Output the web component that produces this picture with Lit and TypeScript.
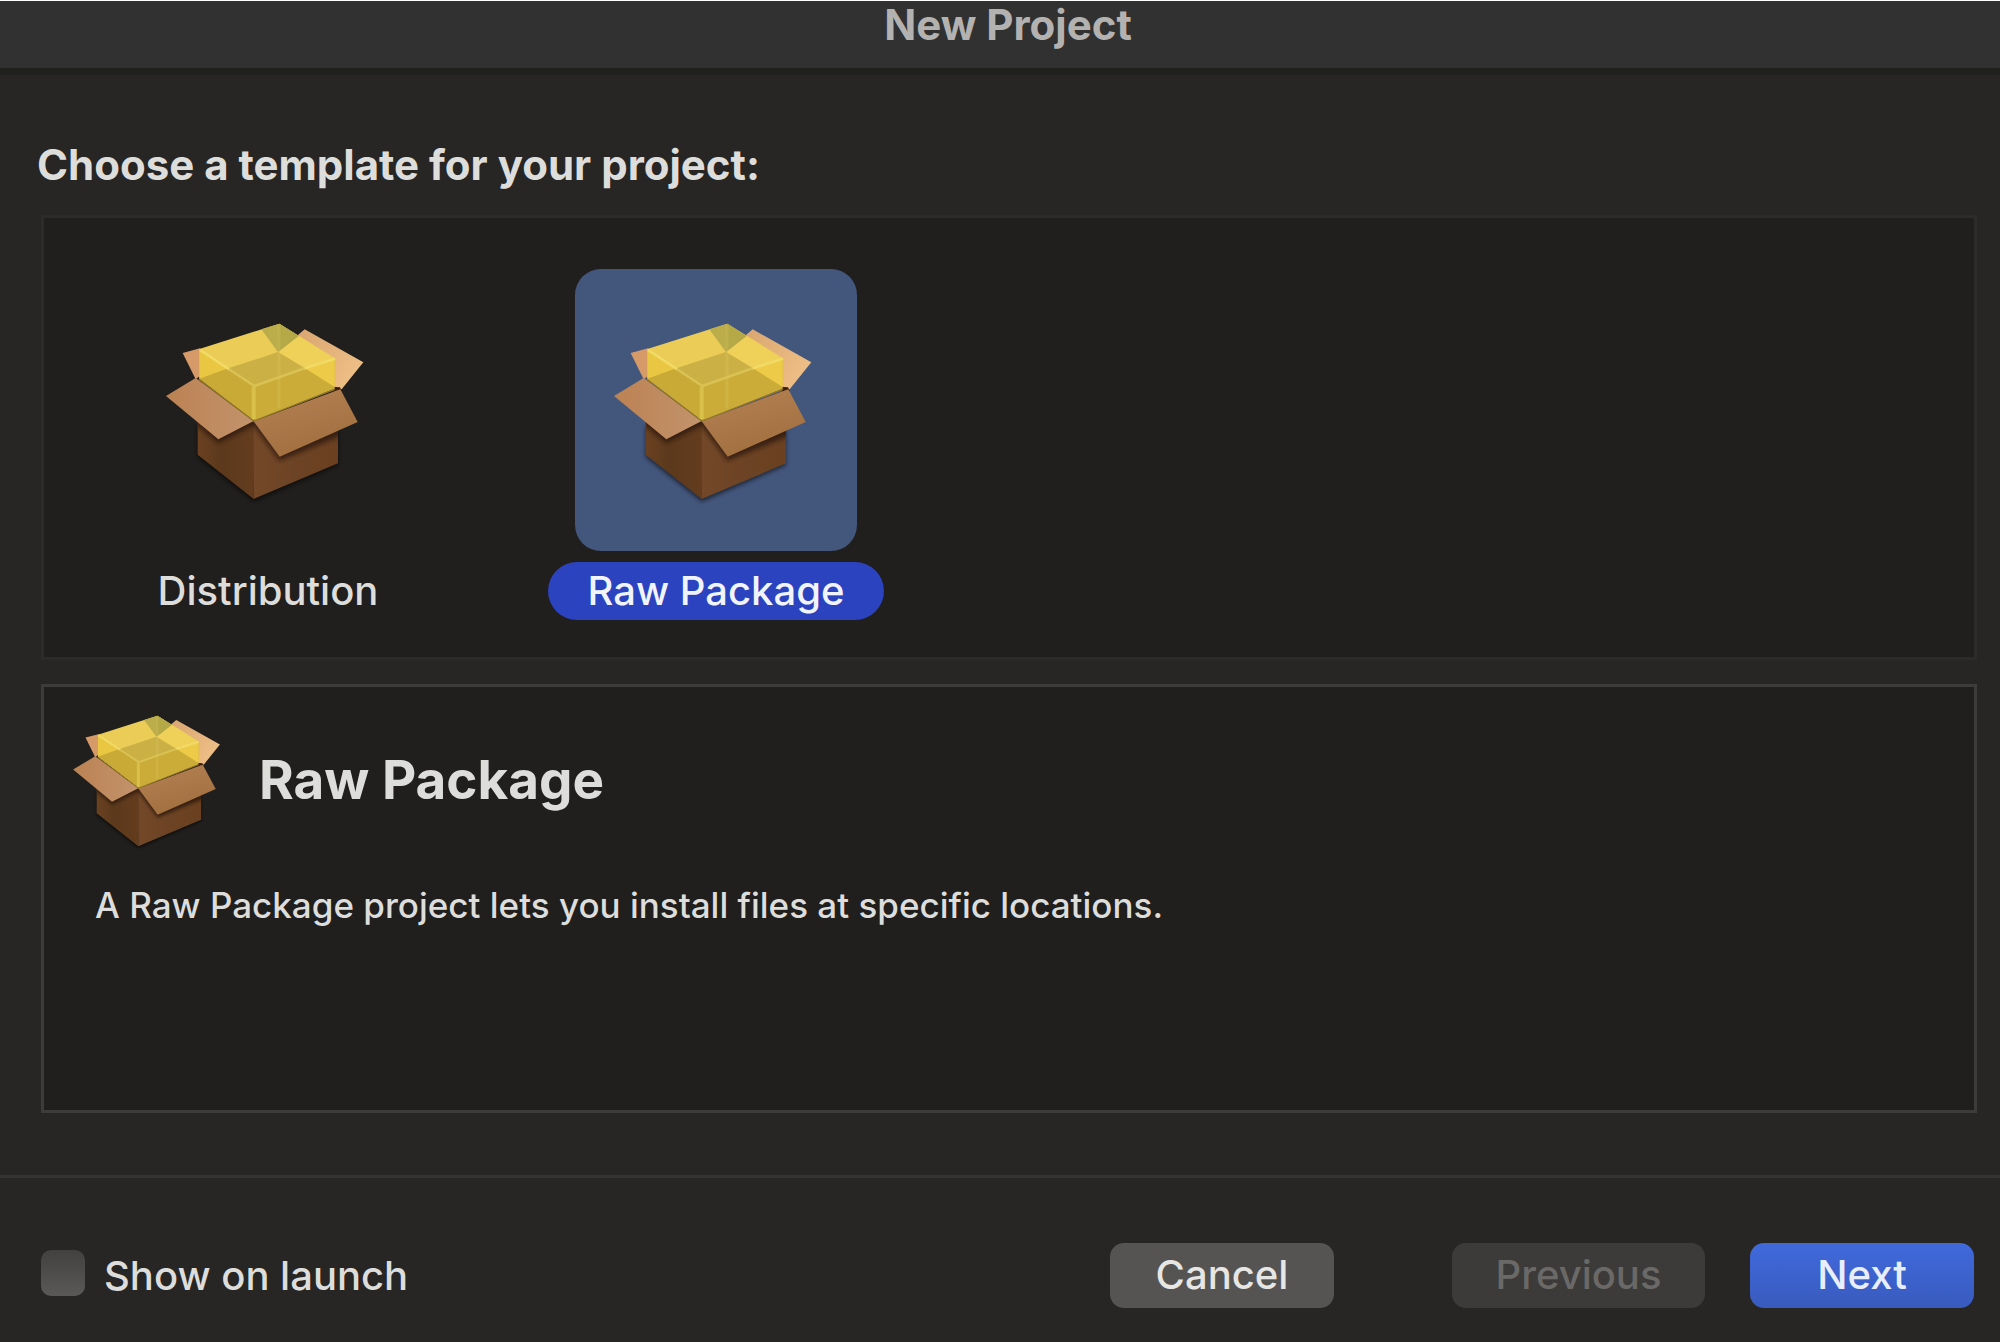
import { LitElement, html, css } from "lit";
import { customElement, property, state } from "lit/decorators.js";

/** Open cardboard box with a translucent yellow block floating in it. */
@customElement("package-icon")
class PackageIcon extends LitElement {
  static styles = css`
    :host {
      display: block;
    }
    .art {
      display: block;
      width: 100%;
      height: auto;
    }
  `;

  render() {
    return html`
      <svg class="art" viewBox="-9 -33 726 726" aria-hidden="true">
        <defs>
          <linearGradient id="side-left" x1="0" y1="0" x2="1" y2="0">
            <stop offset="0" stop-color="#6a4121" />
            <stop offset="0.4" stop-color="#5c391c" />
            <stop offset="1" stop-color="#643c1e" />
          </linearGradient>
          <linearGradient id="side-right" x1="0" y1="0" x2="1" y2="0">
            <stop offset="0" stop-color="#724829" />
            <stop offset="0.5" stop-color="#6c4324" />
            <stop offset="1" stop-color="#6a4020" />
          </linearGradient>
          <linearGradient id="flap-left" x1="0" y1="0" x2="1" y2="0">
            <stop offset="0" stop-color="#bc8253" />
            <stop offset="1" stop-color="#c2936c" />
          </linearGradient>
          <linearGradient id="flap-right" x1="0" y1="0" x2="0.4" y2="1">
            <stop offset="0" stop-color="#b58155" />
            <stop offset="1" stop-color="#a2703f" />
          </linearGradient>
          <linearGradient id="flap-back" x1="0" y1="0" x2="1" y2="0.4">
            <stop offset="0" stop-color="#d5a06c" />
            <stop offset="1" stop-color="#ecbd84" />
          </linearGradient>
          <filter id="soft" x="-20%" y="-20%" width="140%" height="150%">
            <feGaussianBlur stdDeviation="6" />
          </filter>
          <clipPath id="sides">
            <path d="M143 240 L313 365 L564 270 V490 L311 597 L143 464Z" />
          </clipPath>
        </defs>
        <path d="M143 380 H564 V496 L311 605 L143 472Z" fill="#000" opacity="0.55" filter="url(#soft)" />
        <path d="M98 159 L150 145 L200 190 L137 238Z" fill="#d69a69" />
        <path d="M384 156 L464 88 L640 187 L575 268 L540 262Z" fill="url(#flap-back)" />
        <path d="M548 260 L570 262 L576 274 L552 274Z" fill="#3a2110" />
        <path d="M143 240 L313 365 L311 597 L143 464Z" fill="url(#side-left)" />
        <path d="M311 365 L564 270 V490 L311 597Z" fill="url(#side-right)" />
        <g clip-path="url(#sides)">
          <path d="M60 310 L205 430 L311 377 L389 482 L620 388 V280 L313 340Z" fill="#2a1709" opacity="0.75" filter="url(#soft)" />
        </g>
        <path d="M48 288 L137 234 L311 363 L205 418Z" fill="url(#flap-left)" />
        <path d="M311 364 L571 268 L623 366 L389 470Z" fill="url(#flap-right)" />

        <path d="M148 147 L388 71 L554 175 L313 258Z" fill="#ebcc56" />
        <path d="M384 156 L446 107 L554 175 L465 205Z" fill="#efd058" />
        <path d="M334 88 L388 71 L446 107 L384 156Z" fill="#bbad49" />
        <path d="M388 71 L446 107 L384 156Z" fill="#b4a847" />
        <path d="M235 205 L384 156 L465 205 L313 258Z" fill="#cbb046" />
        <path d="M148 147 L313 258 V363 L148 237Z" fill="#c9aa37" />
        <path d="M313 258 L554 175 V266 L313 363Z" fill="#cbac38" />
        <path d="M148 147 L235 205 L148 236Z" fill="#e9c743" />
        <path d="M554 175 L465 205 L554 261Z" fill="#edcb48" />
        <path d="M152 151 L236 207 M464 205 L552 177" fill="none" stroke="#f2da66" stroke-width="8" stroke-linecap="round" />
        <path d="M236 207 L313 258 L464 205" fill="none" stroke="#d9c253" stroke-width="8" stroke-linejoin="round" />
        <path d="M311 260 V358" stroke="#d9c04a" stroke-width="12" />
        <path d="M387 76 V325" stroke="#dcc864" stroke-width="9" opacity="0.25" />
        <path d="M146 238 L311 363 L554 268" fill="none" stroke="#94792a" stroke-width="4" />
      </svg>
    `;
  }
}

/** A selectable project template: artwork above a name. */
@customElement("template-tile")
class TemplateTile extends LitElement {
  @property() name = "";
  @property({ type: Boolean, reflect: true }) selected = false;

  static styles = css`
    :host {
      display: block;
    }
    .tile {
      display: flex;
      flex-direction: column;
      align-items: center;
      gap: 11px;
      width: 340px;
      padding: 0;
      border: 0;
      background: none;
      color: #dddddc;
      font: inherit;
    }
    .frame {
      box-sizing: border-box;
      width: 282px;
      padding: 20px;
      border-radius: 26px;
    }
    .name {
      padding: 0 40px;
      border-radius: 29px;
      line-height: 58px;
      white-space: nowrap;
    }
    :host([selected]) .frame {
      background: #43567c;
    }
    :host([selected]) .name {
      background: #2c43c0;
      color: #f2f4fc;
    }
  `;

  render() {
    return html`
      <button class="tile" type="button" aria-pressed=${this.selected ? "true" : "false"}>
        <span class="frame"><package-icon></package-icon></span>
        <span class="name">${this.name}</span>
      </button>
    `;
  }
}

@customElement("app-root")
class AppRoot extends LitElement {
  @state() private selected = "Raw Package";
  private templates = ["Distribution", "Raw Package"];

  static styles = css`
    :host {
      display: flex;
      flex-direction: column;
      box-sizing: border-box;
      min-height: 100vh;
      border-top: 1px solid #ffffff;
      background: #272624;
      color: #dddddc;
      font-family: Inter, "Liberation Sans", sans-serif;
      font-size: 40px;
      font-weight: 500;
    }
    .titlebar {
      padding: 0 0 20px 16px;
      border-bottom: 7px solid #20201f;
      background: #313131;
      color: #b3b2b1;
      text-align: center;
    }
    .title,
    .prompt,
    .heading {
      margin: 0;
      font-size: 42px;
      font-weight: 700;
      line-height: 47px;
    }
    .content {
      flex: 1;
      display: flex;
      flex-direction: column;
      padding: 66px 23px 62px 41px;
    }
    .prompt {
      margin: 0 0 27px -4px;
    }
    .templates {
      display: flex;
      gap: 108px;
      margin-bottom: 24px;
      padding: 51px 54px 37px;
      border: 3px solid #2b2b2a;
      background: #201f1d;
    }
    .detail {
      flex: 1;
      border: 3px solid #3d3c3a;
      background: #201f1d;
    }
    .summary {
      display: flex;
      align-items: center;
      gap: 20px;
      padding: 3px 15px 0;
    }
    .summary-icon {
      width: 180px;
    }
    .heading {
      font-size: 53px;
    }
    .description {
      margin: 0;
      padding: 15px 51px;
      font-size: 35px;
      line-height: 40px;
    }
    .footer {
      display: flex;
      align-items: center;
      padding: 65px 26px 34px 41px;
      border-top: 3px solid #343432;
    }
    .launch {
      display: flex;
      align-items: center;
      gap: 19px;
      margin-right: auto;
    }
    .check {
      appearance: none;
      width: 44px;
      height: 46px;
      margin: 0 0 6px;
      border-radius: 10px;
      background: linear-gradient(#42413f, #5a5957);
    }
    .check:checked {
      background: #3c64d4;
    }
    .button {
      width: 224px;
      height: 65px;
      padding: 0 0 3px;
      border: 0;
      border-radius: 14px;
      background: #555452;
      color: #e6e6e5;
      font: inherit;
    }
    .previous {
      width: 253px;
      margin: 0 45px 0 118px;
      background: #3c3b39;
      color: #6a6967;
    }
    .next {
      background: linear-gradient(#4069dc, #385bbd);
      color: #e8eefb;
    }
  `;

  render() {
    return html`
      <header class="titlebar"><h1 class="title">New Project</h1></header>
      <main class="content">
        <h2 class="prompt">Choose a template for your project:</h2>
        <section class="templates">
          ${this.templates.map(
            (name) => html`
              <template-tile
                .name=${name}
                ?selected=${name === this.selected}
                @click=${() => (this.selected = name)}
              ></template-tile>
            `
          )}
        </section>
        <section class="detail">
          <div class="summary">
            <package-icon class="summary-icon"></package-icon>
            <h2 class="heading">${this.selected}</h2>
          </div>
          <p class="description">
            A ${this.selected} project lets you install files at specific locations.
          </p>
        </section>
      </main>
      <footer class="footer">
        <label class="launch">
          <input class="check" type="checkbox" />
          Show on launch
        </label>
        <button class="button" type="button">Cancel</button>
        <button class="button previous" type="button" disabled>Previous</button>
        <button class="button next" type="button">Next</button>
      </footer>
    `;
  }
}
